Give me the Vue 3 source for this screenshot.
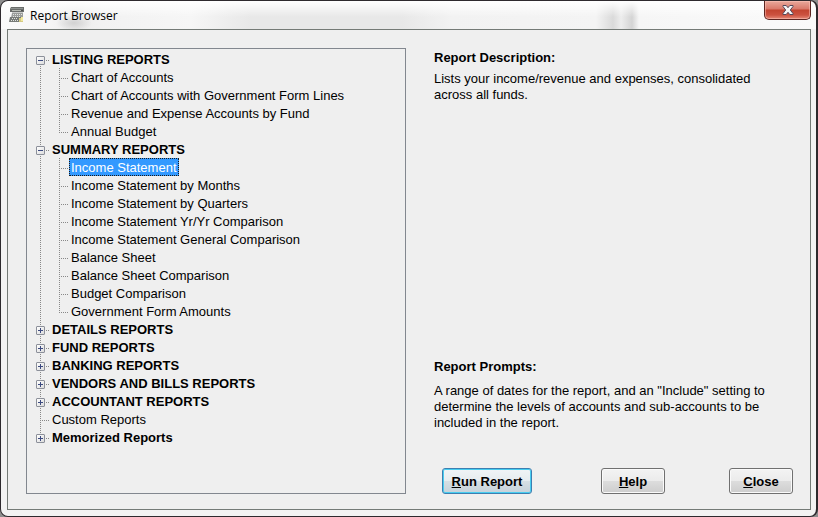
<template>
  <div class="window">
    <header class="title-bar">
      <svg class="app-icon" viewBox="0 0 16 16" aria-hidden="true">
        <path d="M2 0h13v5H1V2z" fill="#6a6d6b" />
        <path d="M2 1h12v1H2z" fill="#8f9391" />
        <path d="M3 3h9v1H3z" fill="#b5bab2" />
        <path d="M12 3h2v1h-2z" fill="#4c4f4e" />
        <path d="M3 5h11v1H3z" fill="#c9cbc9" />
        <path d="M3 6h11v5H2z" fill="#9a9d9b" />
        <path d="M1 10h13v5H0z" fill="#777b78" />
        <path d="M4 7.500h1M6 7.500h1M8 7.500h1M10 7.500h1M12 7.500h1M4 9.500h1M6 9.500h1M8 9.500h1M10 9.500h1M3 11.500h1M5 11.500h1M7 11.500h1M2 13.500h1M4 13.500h1M6 13.500h1M8 13.500h1" stroke="#e2e4e0" />
        <path d="M10 11h4v4h-4z" fill="#d3c983" />
        <path d="M12 10h2v4h-2z" fill="#f2e99c" />
      </svg>
      <h1 class="title">Report Browser</h1>
      <button class="close-btn" type="button" aria-label="Close window">
        <svg viewBox="0 0 12 10" aria-hidden="true">
          <path d="M1 .5h3.200L6 2.700 7.800.5H11v1L8.300 5 11 8.500v1H7.800L6 7.300 4.200 9.500H1v-1L3.700 5 1 1.500z" fill="#f6f6f6" stroke="#54485a" />
        </svg>
      </button>
    </header>

    <main class="content">
      <ul class="tree">
        <li v-for="group in groups" :key="group.name" class="group">
          <div class="row">
            <button
              v-if="group.children"
              class="expander"
              :class="{ plus: !group.expanded }"
              type="button"
              :aria-label="'Toggle ' + group.name"
              :aria-expanded="group.expanded"
              @click="group.expanded = !group.expanded"
            ></button>
            <span v-else class="no-expander"></span>
            <button
              class="label"
              :class="{ bold: group.children, selected: selected === group.name }"
              type="button"
              @click="selected = group.name"
            >{{ group.name }}</button>
          </div>
          <ul v-if="group.expanded" class="children">
            <li v-for="child in group.children" :key="child" class="child">
              <button
                class="label"
                :class="{ selected: selected === child }"
                type="button"
                @click="selected = child"
              >{{ child }}</button>
            </li>
          </ul>
        </li>
      </ul>

      <section class="details">
        <h2>Report Description:</h2>
        <p>Lists your income/revenue and expenses, consolidated across all funds.</p>
        <h2 class="prompts">Report Prompts:</h2>
        <p>A range of dates for the report, and an "Include" setting to determine the levels of accounts and sub-accounts to be included in the report.</p>
        <div class="actions">
          <button class="btn run" type="button"><u>R</u>un Report</button>
          <button class="btn" type="button"><u>H</u>elp</button>
          <button class="btn" type="button"><u>C</u>lose</button>
        </div>
      </section>
    </main>
  </div>
</template>

<script setup>
import { ref } from 'vue';

const selected = ref('Income Statement');

const groups = ref([
  {
    name: 'LISTING REPORTS',
    expanded: true,
    children: [
      'Chart of Accounts',
      'Chart of Accounts with Government Form Lines',
      'Revenue and Expense Accounts by Fund',
      'Annual Budget'
    ]
  },
  {
    name: 'SUMMARY REPORTS',
    expanded: true,
    children: [
      'Income Statement',
      'Income Statement by Months',
      'Income Statement by Quarters',
      'Income Statement Yr/Yr Comparison',
      'Income Statement General Comparison',
      'Balance Sheet',
      'Balance Sheet Comparison',
      'Budget Comparison',
      'Government Form Amounts'
    ]
  },
  { name: 'DETAILS REPORTS', expanded: false, children: [] },
  { name: 'FUND REPORTS', expanded: false, children: [] },
  { name: 'BANKING REPORTS', expanded: false, children: [] },
  { name: 'VENDORS AND BILLS REPORTS', expanded: false, children: [] },
  { name: 'ACCOUNTANT REPORTS', expanded: false, children: [] },
  { name: 'Custom Reports' },
  { name: 'Memorized Reports', expanded: false, children: [] }
]);
</script>

<style>
body {
  background: #8d8d8d;
}
</style>

<style scoped>
.window {
  display: flex;
  flex-direction: column;
  box-sizing: border-box;
  min-height: 100vh;
  padding: 0 5px 6px 6px;
  border: 1px solid #2e2a2e;
  border-right-width: 2px;
  border-radius: 8px;
  background:
    linear-gradient(#fff, rgba(255, 255, 255, 0) 16px) 0 0 / 100% 28px no-repeat,
    radial-gradient(18px 8px at 73px 22px, #d2d2d2, rgba(210, 210, 210, 0)) 0 0 / 100% 28px no-repeat,
    linear-gradient(90deg, #fafafa 0, #f5f5f5 50px, #ececec 75px, #f2f2f2 100px, #f6f6f6 190px, #e8e8e8 250px, #e8e8e8 400px, #f2f2f2 450px, #f4f4f4 595px, #dadada 612px, #ededed 620px, #d4d4d4 631px, #f6f6f6 638px, #fafafa 100%) 0 0 / 100% 28px no-repeat,
    #f3f3f3;
  font-family: "Liberation Sans", Arial, sans-serif;
  font-size: 13px;
  color: #000;
}

button {
  font: inherit;
  color: inherit;
}

.title-bar {
  display: flex;
  align-items: center;
  height: 28px;
  padding-left: 2px;
}

.app-icon {
  width: 16px;
  height: 16px;
}

.title {
  margin: 0 auto 0 5px;
  font-family: "Open Sans", "Noto Sans", sans-serif;
  font-size: 12px;
  font-weight: normal;
}

.close-btn {
  display: flex;
  align-items: center;
  justify-content: center;
  align-self: flex-start;
  width: 47px;
  height: 19px;
  padding: 0;
  border: 1px solid #5c2521;
  border-top: none;
  border-radius: 0 0 5px 5px;
  background: linear-gradient(#e9a99c 0, #d9796a 8px, #c24430 9px, #cc5240 14px, #e58a78 100%);
  box-shadow: inset 0 0 0 1px rgba(255, 200, 190, 0.5);
}

.close-btn svg {
  width: 12px;
  height: 10px;
}

.content {
  flex: 1;
  display: grid;
  grid-template-columns: 380fr 359fr;
  gap: 28px;
  padding: 18px 17px 15px 18px;
  border: 1px solid #747a76;
  background: #efefef;
}

ul {
  margin: 0;
  padding: 0;
  list-style: none;
}

.tree {
  padding: 1px 9px;
  border: 1px solid #82878f;
}

/* dotted trunk running through the expander column */
.group {
  background: repeating-linear-gradient(#888 0 1px, transparent 1px 2px) 4px 0 / 1px 100% no-repeat;
}

.group:first-child {
  background-position: 4px 10px;
}

.group:last-child {
  background-size: 1px 10px;
}

.row {
  display: flex;
  align-items: center;
  height: 18px;
  background: repeating-linear-gradient(90deg, #888 0 1px, transparent 1px 2px) 10px 10px / 3px 1px no-repeat;
}

.expander {
  width: 9px;
  height: 9px;
  margin: 2px 7px 0 0;
  padding: 0;
  border: 1px solid #8c909a;
  border-radius: 1px;
  background:
    linear-gradient(#3c4a80, #3c4a80) center / 5px 1px no-repeat,
    linear-gradient(135deg, #fff, #dcdcdc);
}

.expander.plus {
  background:
    linear-gradient(#3c4a80, #3c4a80) center / 5px 1px no-repeat,
    linear-gradient(#3c4a80, #3c4a80) center / 1px 5px no-repeat,
    linear-gradient(135deg, #fff, #dcdcdc);
}

.no-expander {
  width: 9px;
  height: 1px;
  margin: 2px 7px 0 0;
  background: repeating-linear-gradient(90deg, #888 0 1px, transparent 1px 2px) 4px 0 / 5px 1px no-repeat;
}

.label {
  height: 18px;
  margin-left: -2px;
  padding: 1px 1px 0;
  border: 1px solid transparent;
  background: none;
  line-height: 15px;
  white-space: nowrap;
}

.label.bold {
  font-weight: bold;
}

.label.selected {
  border: 1px dotted #1a1a1a;
  background: #3399ff;
  color: #fff;
}

.children {
  padding-left: 23px;
}

.child {
  display: flex;
  height: 18px;
  padding-left: 12px;
  background:
    repeating-linear-gradient(#888 0 1px, transparent 1px 2px) 0 0 / 1px 100% no-repeat,
    repeating-linear-gradient(90deg, #888 0 1px, transparent 1px 2px) 0 10px / 9px 1px no-repeat;
}

.child:last-child {
  background-size: 1px 10px, 9px 1px;
}

.details {
  display: flex;
  flex-direction: column;
  padding-top: 2px;
}

h2 {
  margin: 0 0 5px;
  font-size: 13px;
  line-height: 16px;
}

.details p {
  max-width: 340px;
  margin: 0;
  line-height: 16px;
}

.details .prompts {
  margin: auto 0 8px;
}

.actions {
  display: flex;
  gap: 64px;
  margin-top: 37px;
  padding-left: 8px;
}

.btn {
  width: 64px;
  height: 26px;
  padding: 0;
  border: 1px solid #707070;
  border-radius: 3px;
  background: linear-gradient(#f3f3f3 0, #ebebeb 50%, #dddddd 50%, #cdcdcd 100%);
  box-shadow: inset 0 0 0 1px #fafafa;
  font-weight: bold;
}

.btn.run {
  width: 90px;
  margin-right: auto;
  border-color: #3c7fb1;
  background: linear-gradient(#f0f4f6 0, #e6ecef 50%, #d6dfe4 50%, #c6d2da 100%);
  box-shadow: inset 0 0 0 1px #48cdf0;
}
</style>
